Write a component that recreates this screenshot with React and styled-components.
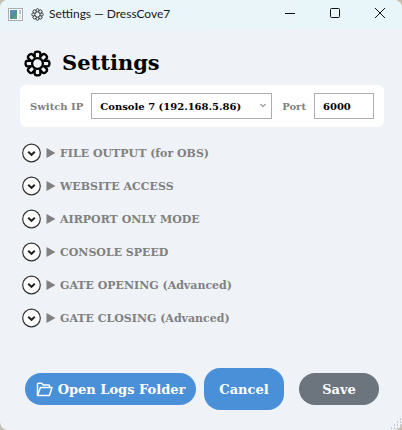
import React, { useState } from 'react'
import styled, { createGlobalStyle } from 'styled-components'

const GlobalStyle = createGlobalStyle`
  * {
    box-sizing: border-box;
  }

  body {
    margin: 0;
    background: #c4bfb2;
    font-family: 'DejaVu Serif', 'Liberation Serif', serif;
  }

  button,
  input,
  select {
    font-family: inherit;
  }
`

const Window = styled.div`
  position: relative;
  display: flex;
  flex-direction: column;
  min-height: 100vh;
  border-radius: 8px;
  overflow: hidden;
  background: #eff3f8;
`

const TitleBar = styled.header`
  display: flex;
  align-items: center;
  height: 29px;
  padding-left: 8px;
  background: linear-gradient(90deg, #eaf5f9, #e8f5f9);
  color: #1a1a1a;
`

const TitleText = styled.span`
  flex: 1;
  margin-left: 5px;
  padding-bottom: 2px;
  font-family: Lato, 'Open Sans', sans-serif;
  font-size: 12px;
  line-height: 16px;
  white-space: nowrap;
`

const TitleGear = styled.span`
  display: flex;
  margin-left: 8px;
`

const WindowButton = styled.button`
  display: flex;
  align-items: center;
  justify-content: center;
  width: 45px;
  height: 29px;
  padding: 0 0 3px;
  border: 0;
  background: none;
  color: #111;
`

const Body = styled.main`
  display: flex;
  flex: 1;
  flex-direction: column;
  padding: 16px 18px 20px 20px;
`

const Heading = styled.h1`
  display: flex;
  align-items: center;
  gap: 11px;
  height: 36px;
  margin: 0 0 4px;
  padding-left: 4px;
  color: #000;
  font-size: 21px;
  line-height: 28px;
`

const Card = styled.section`
  display: flex;
  align-items: center;
  height: 42px;
  padding: 0 10px;
  border-radius: 6px;
  background: #fff;
`

const Label = styled.label`
  margin: ${(p) => p.$margin};
  color: #808080;
  font-size: 10px;
  font-weight: bold;
  white-space: nowrap;
`

const SelectBox = styled.div`
  position: relative;
  flex: 1;
  min-width: 0;

  svg {
    position: absolute;
    top: 10px;
    right: 6px;
    pointer-events: none;
  }
`

const Select = styled.select`
  display: block;
  width: 100%;
  height: 26px;
  padding: 0 18px 0 8px;
  border: 1px solid #abadb3;
  border-radius: 0;
  appearance: none;
  background: #fff;
  color: #000;
  font-size: 10px;
  font-weight: bold;
`

const PortInput = styled.input`
  width: 60px;
  height: 26px;
  padding: 0 8px;
  border: 1px solid #abadb3;
  background: #fff;
  color: #000;
  font-size: 10px;
  font-weight: bold;
`

const Sections = styled.div`
  display: flex;
  flex-direction: column;
  align-items: flex-start;
  gap: 13px;
  margin-top: 16px;
  padding-left: 2px;
`

const SectionToggle = styled.button`
  display: flex;
  align-items: center;
  height: 20px;
  padding: 0;
  border: 0;
  background: none;
  color: #808080;
  font-size: 11px;
  font-weight: bold;
  white-space: nowrap;
`

const Arrow = styled.svg`
  margin: 0 4px 0 5px;
`

const Footer = styled.footer`
  display: flex;
  align-items: center;
  justify-content: flex-end;
  margin-top: auto;
  padding-right: 5px;
`

const ActionButton = styled.button`
  display: flex;
  align-items: center;
  justify-content: center;
  gap: 5px;
  width: ${(p) => (p.$wide ? '171px' : '80px')};
  height: ${(p) => (p.$tall ? '42px' : '32px')};
  margin-left: ${(p) => p.$space || '0'};
  padding: 0;
  border: 0;
  border-radius: 16px;
  background: ${(p) => (p.$muted ? '#6c757d' : '#4a90d9')};
  color: #fff;
  font-size: 13px;
  font-weight: bold;
  white-space: nowrap;
`

const Grip = styled.svg`
  position: absolute;
  right: 0;
  bottom: 1px;
`

const Gear = ({ size, stroke }) => (
  <svg width={size} height={size} viewBox="0 0 28 28" fill="none" stroke="currentColor" strokeWidth={stroke}>
    {[...Array(8)].map((x, id) => (
      <path
        key={id}
        transform={`rotate(${id * 45} 14 14)`}
        d="M11.2 7.8 L11 4 Q11 1.6 14 1.6 Q17 1.6 17 4 L16.8 7.8"
      />
    ))}
    <circle cx="14" cy="14" r="5.6" />
  </svg>
)

const AppIcon = () => (
  <svg width="15" height="13" viewBox="0 0 15 13">
    <rect x="0.5" y="0.5" width="14" height="12" fill="#fafafa" stroke="#a9adb0" />
    <rect x="2" y="2" width="7" height="9" fill="#4c8f9b" />
    <path d="M2 2h7L2 8z" fill="#5c8fb8" />
    <path d="M9 5v6H4z" fill="#5aa17c" />
    <rect x="11" y="2" width="2" height="4" fill="#b9c3cb" />
    <rect x="11" y="7" width="2" height="4" fill="#dde1e4" />
  </svg>
)

const Folder = () => (
  <svg width="17" height="15" viewBox="0 0 17 15" fill="none" stroke="#fff" strokeWidth="1.5" strokeLinejoin="round">
    <path d="M1.5 13.5V2.2Q1.5 1.2 2.5 1.2H5.6L7.3 3H12.6Q13.6 3 13.6 4V5.5" />
    <path d="M1.5 13.5L4.4 5.6H16L13.4 13.5Z" />
  </svg>
)

const gripDots = [
  [9, 0],
  [6, 3], [9, 3],
  [3, 6], [6, 6], [9, 6],
  [0, 9], [3, 9], [6, 9], [9, 9],
]

const sections = [
  'FILE OUTPUT (for OBS)',
  'WEBSITE ACCESS',
  'AIRPORT ONLY MODE',
  'CONSOLE SPEED',
  'GATE OPENING (Advanced)',
  'GATE CLOSING (Advanced)',
]

const Section = ({ title }) => {
  const [open, setOpen] = useState(false)

  return (
    <SectionToggle type="button" aria-expanded={open} onClick={() => setOpen(!open)}>
      <svg width="19" height="20" viewBox="0 0 19 20">
        <circle cx="9.5" cy="10" r="8.8" fill="#fff" stroke="#333" strokeWidth="1.2" />
        <path d="M6.2 8.8L9.5 11.8L12.8 8.8" fill="none" stroke="#222" strokeWidth="2" />
      </svg>
      <Arrow width="10" height="10" viewBox="0 0 10 10">
        <path d="M0.5 0L9.5 5L0.5 10Z" fill="#808080" />
      </Arrow>
      {title}
    </SectionToggle>
  )
}

const App = () => {
  const [port, setPort] = useState('6000')

  return (
    <>
      <GlobalStyle />
      <Window>
        <TitleBar>
          <AppIcon />
          <TitleGear>
            <Gear size={13} stroke={1.8} />
          </TitleGear>
          <TitleText>Settings — DressCove7</TitleText>
          <WindowButton type="button" aria-label="Minimize">
            <svg width="10" height="10" stroke="currentColor">
              <path d="M0 5.5H10" />
            </svg>
          </WindowButton>
          <WindowButton type="button" aria-label="Maximize">
            <svg width="10" height="10" fill="none" stroke="currentColor">
              <rect x="0.5" y="0.5" width="9" height="9" rx="1" />
            </svg>
          </WindowButton>
          <WindowButton type="button" aria-label="Close">
            <svg width="10" height="10" stroke="currentColor">
              <path d="M0 0L10 10M10 0L0 10" />
            </svg>
          </WindowButton>
        </TitleBar>
        <Body>
          <Heading>
            <Gear size={27} stroke={2.4} />
            Settings
          </Heading>
          <Card>
            <Label htmlFor="ip" $margin="0 8px 0 0">Switch IP</Label>
            <SelectBox>
              <Select id="ip" defaultValue="7">
                <option value="7">Console 7 (192.168.5.86)</option>
              </Select>
              <svg width="6" height="5" fill="none" stroke="#555" strokeWidth="1">
                <path d="M0.5 1L3 3.6L5.5 1" />
              </svg>
            </SelectBox>
            <Label htmlFor="port" $margin="0 8px 0 10px">Port</Label>
            <PortInput id="port" value={port} onChange={(e) => setPort(e.target.value)} />
          </Card>
          <Sections>
            {sections.map((title) => (
              <Section key={title} title={title} />
            ))}
          </Sections>
          <Footer>
            <ActionButton type="button" $wide>
              <Folder />
              Open Logs Folder
            </ActionButton>
            <ActionButton type="button" $tall $space="8px">Cancel</ActionButton>
            <ActionButton type="button" $muted $space="15px">Save</ActionButton>
          </Footer>
        </Body>
        <Grip width="11" height="11" fill="#c3cad8">
          {gripDots.map(([x, y]) => (
            <rect key={`${x}-${y}`} x={x} y={y} width="1" height="2" />
          ))}
        </Grip>
      </Window>
    </>
  )
}

export default App
